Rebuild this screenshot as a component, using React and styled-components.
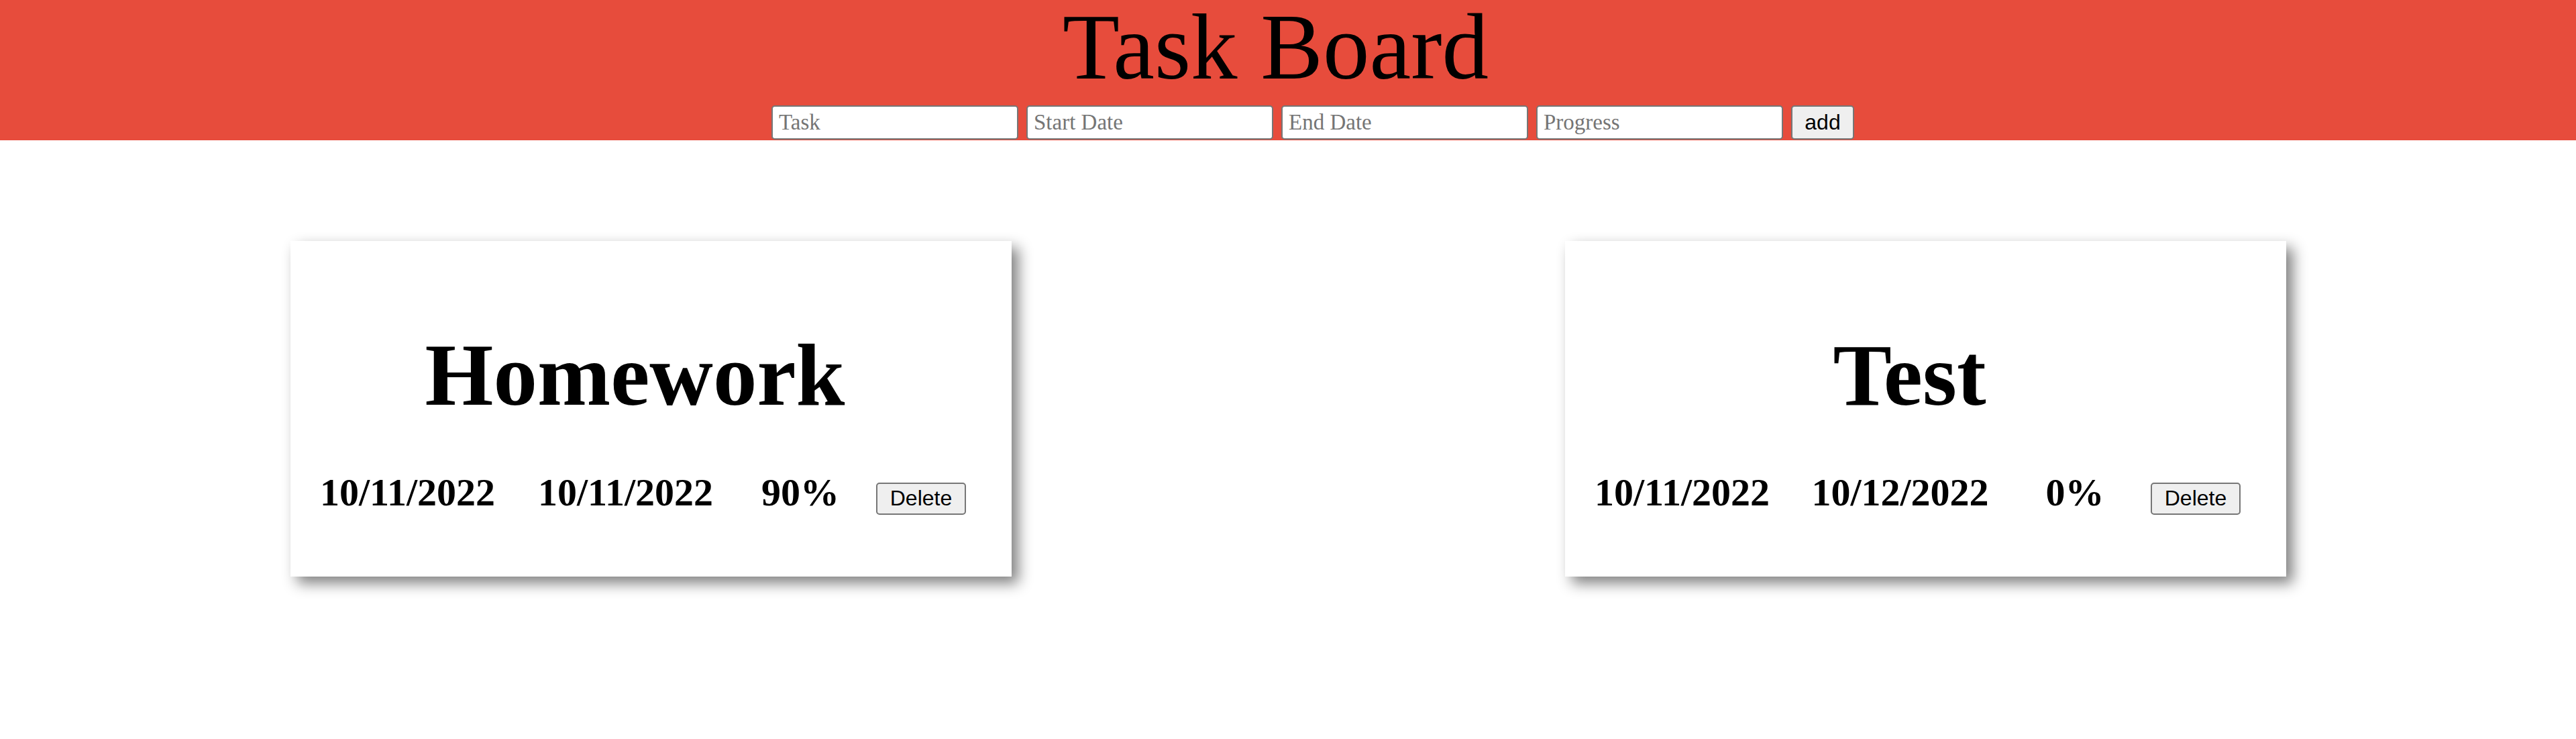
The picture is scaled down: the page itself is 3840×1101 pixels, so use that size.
import React from 'react';
import styled, { createGlobalStyle } from 'styled-components';

const GlobalStyle = createGlobalStyle`
  body {
    margin: 0;
    background: #fff;
    font-family: "Liberation Serif", "Times New Roman", serif;
    color: #000;
  }
`;

const Header = styled.header`
  background: #e74c3c;
  padding-bottom: 1px;
`;

const Title = styled.h1`
  margin: 0;
  padding-right: 37px;
  font-size: 139px;
  font-weight: normal;
  line-height: 140px;
  text-align: center;
`;

const Form = styled.form`
  display: flex;
  justify-content: center;
  gap: 12px;
  margin-top: 17px;
  padding-left: 74px;
`;

const Input = styled.input`
  box-sizing: border-box;
  width: 368px;
  height: 51px;
  padding: 0 9px;
  border: 2px solid #767676;
  border-radius: 5px;
  background: #fff;
  font-family: "Liberation Serif", "Times New Roman", serif;
  font-size: 33px;
  color: #000;
  outline: none;

  &::placeholder {
    color: #757575;
  }
`;

const Button = styled.button`
  box-sizing: border-box;
  width: ${p => p.$w}px;
  height: ${p => p.$h}px;
  padding: 0;
  border: 2px solid #767676;
  border-radius: 5px;
  background: #efefef;
  font-family: "Liberation Sans", Arial, sans-serif;
  font-size: 32px;
  color: #000;
`;

const Board = styled.main`
  display: flex;
  justify-content: space-between;
  padding: 150px 432px 200px 433px;
`;

const Card = styled.section`
  box-sizing: border-box;
  width: 1075px;
  height: 500px;
  padding-top: 135px;
  background: #fff;
  box-shadow: 10px 10px 20px #808080;
`;

const CardTitle = styled.h2`
  margin: 0;
  padding-right: 48px;
  font-size: 131px;
  font-weight: bold;
  line-height: 130px;
  text-align: center;
`;

const Details = styled.div`
  display: grid;
  grid-template-columns: 349px 301px 220px 140px;
  align-items: baseline;
  justify-items: center;
  margin-top: 81px;
`;

const Cell = styled.span`
  font-size: 58px;
  font-weight: bold;
  line-height: 58px;
`;

const tasks = [
  { name: 'Homework', start: '10/11/2022', end: '10/11/2022', progress: '90%' },
  { name: 'Test', start: '10/11/2022', end: '10/12/2022', progress: '0%' },
];

export default function App() {
  return (
    <>
      <GlobalStyle />
      <Header>
        <Title>Task Board</Title>
        <Form onSubmit={e => e.preventDefault()}>
          <Input placeholder="Task" />
          <Input placeholder="Start Date" />
          <Input placeholder="End Date" />
          <Input placeholder="Progress" />
          <Button type="submit" $w={94} $h={51}>add</Button>
        </Form>
      </Header>
      <Board>
        {tasks.map(task => (
          <Card key={task.name}>
            <CardTitle>{task.name}</CardTitle>
            <Details>
              <Cell>{task.start}</Cell>
              <Cell>{task.end}</Cell>
              <Cell>{task.progress}</Cell>
              <Button type="button" $w={134} $h={48}>Delete</Button>
            </Details>
          </Card>
        ))}
      </Board>
    </>
  );
}
